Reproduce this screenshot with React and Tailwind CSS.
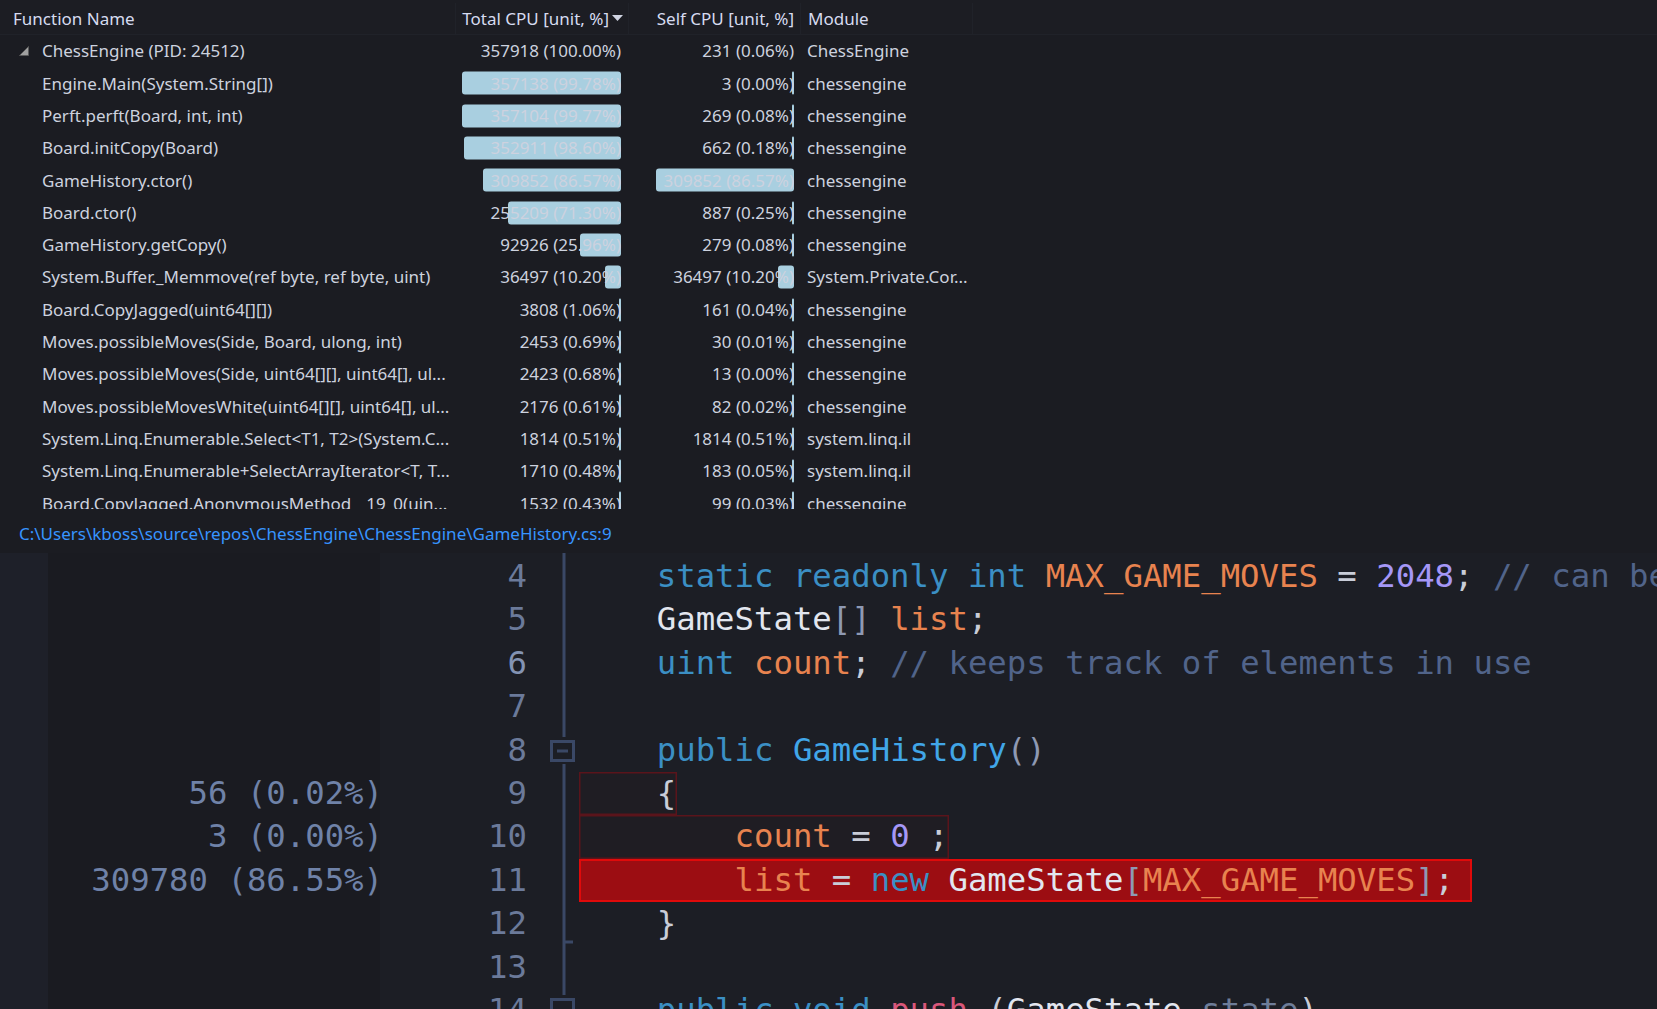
import React from "react";

const rows = [
  ["ChessEngine (PID: 24512)", "357918 (100.00%)", null, "231 (0.06%)", null, "ChessEngine", true],
  ["Engine.Main(System.String[])", "357138 (99.78%)", 99.78, "3 (0.00%)", 0, "chessengine"],
  ["Perft.perft(Board, int, int)", "357104 (99.77%)", 99.77, "269 (0.08%)", 0.08, "chessengine"],
  ["Board.initCopy(Board)", "352911 (98.60%)", 98.6, "662 (0.18%)", 0.18, "chessengine"],
  ["GameHistory.ctor()", "309852 (86.57%)", 86.57, "309852 (86.57%)", 86.57, "chessengine"],
  ["Board.ctor()", "255209 (71.30%)", 71.3, "887 (0.25%)", 0.25, "chessengine"],
  ["GameHistory.getCopy()", "92926 (25.96%)", 25.96, "279 (0.08%)", 0.08, "chessengine"],
  ["System.Buffer._Memmove(ref byte, ref byte, uint)", "36497 (10.20%)", 10.2, "36497 (10.20%)", 10.2, "System.Private.Cor..."],
  ["Board.CopyJagged(uint64[][])", "3808 (1.06%)", 1.06, "161 (0.04%)", 0.04, "chessengine"],
  ["Moves.possibleMoves(Side, Board, ulong, int)", "2453 (0.69%)", 0.69, "30 (0.01%)", 0.01, "chessengine"],
  ["Moves.possibleMoves(Side, uint64[][], uint64[], ul...", "2423 (0.68%)", 0.68, "13 (0.00%)", 0, "chessengine"],
  ["Moves.possibleMovesWhite(uint64[][], uint64[], ul...", "2176 (0.61%)", 0.61, "82 (0.02%)", 0.02, "chessengine"],
  ["System.Linq.Enumerable.Select<T1, T2>(System.C...", "1814 (0.51%)", 0.51, "1814 (0.51%)", 0.51, "system.linq.il"],
  ["System.Linq.Enumerable+SelectArrayIterator<T, T...", "1710 (0.48%)", 0.48, "183 (0.05%)", 0.05, "system.linq.il"],
  ["Board.CopyJagged.AnonymousMethod__19_0(uin...", "1532 (0.43%)", 0.43, "99 (0.03%)", 0.03, "chessengine"],
];

const kw = "text-[#3b8fc4]";
const field = "text-[#e8834f]";
const num = "text-[#a597f7]";
const punct = "text-[#c9cdd8]";
const brk = "text-[#8e99b3]";
const cmt = "text-[#51648a]";
const type = "text-[#e2e6ef]";

function CpuCell({ text, pct, className }) {
  return (
    <div className={`relative flex h-full items-center justify-end ${className}`}>
      {pct !== null && pct !== undefined && (
        <div
          className="absolute right-0 top-1/2 h-[23px] -translate-y-1/2 rounded-[3px] bg-[#a9cfe0]"
          style={{ width: Math.max(2, (pct / 100) * 159) }}
        />
      )}
      <span className="relative">{text}</span>
    </div>
  );
}

function Table() {
  return (
    <div className="h-[509px] overflow-hidden text-[17px] text-[#cdd2df]">
      <div className="flex h-[35px] items-center border-b border-[#202229] bg-[#1c1d23] pt-[3px] text-[#d6dbf0]">
        <div className="w-[455px] pl-[13px]">Function Name</div>
        <div className="flex h-full w-[173px] items-center justify-end gap-[3px] border-l border-[#202229] pr-[5px]">
          <span>Total CPU [unit, %]</span>
          <svg width="11" height="7" viewBox="0 0 11 7">
            <polygon points="0,0 11,0 5.5,6" fill="#d0d4e2" />
          </svg>
        </div>
        <div className="flex h-full w-[172px] items-center justify-end border-l border-[#202229] pr-[6px]">
          Self CPU [unit, %]
        </div>
        <div className="flex h-full w-[173px] items-center border-x border-[#202229] pl-[7px]">Module</div>
      </div>
      <div>
        {rows.map((r, i) => (
          <div key={i} className="flex h-[32.3px] items-center whitespace-nowrap">
            <div className="relative flex w-[455px] items-center pl-[42px]">
              {r[6] && (
                <svg className="absolute left-[19px]" width="10" height="10" viewBox="0 0 10 10">
                  <polygon points="9.5,0.5 9.5,9.5 0.5,9.5" fill="#a0a0a0" stroke="#5a5a5a" strokeWidth="0.8" />
                </svg>
              )}
              {r[0]}
            </div>
            <CpuCell text={r[1]} pct={r[2]} className="w-[166px]" />
            <div className="w-[7px]" />
            <CpuCell text={r[3]} pct={r[4]} className="w-[166px]" />
            <div className="w-[13px]" />
            <div>{r[5]}</div>
          </div>
        ))}
      </div>
    </div>
  );
}

const code = [
  { n: 4, parts: [["    ", ""], ["static readonly int ", kw], ["MAX_GAME_MOVES", field], [" = ", punct], ["2048", num], ["; ", punct], ["// can be changed if needed", cmt]] },
  { n: 5, parts: [["    ", ""], ["GameState", type], ["[]", brk], [" ", ""], ["list", field], [";", punct]] },
  { n: 6, parts: [["    ", ""], ["uint ", kw], ["count", field], ["; ", punct], ["// keeps track of elements in use", cmt]] },
  { n: 7, parts: [] },
  { n: 8, parts: [["    ", ""], ["public ", kw], ["GameHistory", "text-[#41a6e8]"], ["()", brk]] },
  { n: 9, parts: [["    ", ""], ["{", punct]], box: "w-[98px] bg-[#1f1d23] shadow-[inset_0_0_0_1.5px_#5a141b]", pct: "56 (0.02%)" },
  { n: 10, parts: [["        ", ""], ["count", field], [" = ", punct], ["0", num], [" ;", punct]], box: "w-[370px] bg-[#1f1d23] shadow-[inset_0_0_0_1.5px_#5a141b]", pct: "3 (0.00%)" },
  { n: 11, parts: [["        ", ""], ["list", field], [" = ", punct], ["new ", kw], ["GameState", type], ["[", brk], ["MAX_GAME_MOVES", field], ["]", brk], [";", punct]], box: "w-[893px] bg-[#9c0d12] shadow-[inset_0_0_0_2px_#e00a0a]", pct: "309780 (86.55%)" },
  { n: 12, parts: [["    ", ""], ["}", punct]] },
  { n: 13, parts: [] },
  { n: 14, parts: [["    ", ""], ["public void ", kw], ["push", "text-[#d9577a]"], [" (", punct], ["GameState", type], [" ", ""], ["state", "text-[#6e7d99]"], [")", punct]] },
];

function Gutter() {
  return (
    <svg width="54" height="456" viewBox="0 0 54 456" className="block">
      <g stroke="#3a4866" strokeWidth="3" fill="none">
        <line x1="39" y1="0" x2="39" y2="184" />
        <rect x="26.5" y="188.5" width="22" height="19" />
        <line x1="32" y1="198" x2="43" y2="198" />
        <line x1="39" y1="211" x2="39" y2="442" />
        <line x1="39" y1="389" x2="48" y2="389" />
        <rect x="26.5" y="446.5" width="22" height="19" />
      </g>
    </svg>
  );
}

function Editor() {
  const lineH = "h-[43.4px] leading-[43.4px]";
  return (
    <div
      className="flex h-[456px] overflow-hidden bg-[#1c1e25] text-[32.3px]"
      style={{ fontFamily: '"DejaVu Sans Mono", monospace' }}
    >
      <div className="w-[48px] shrink-0 bg-[#1e2029]" />
      <div className="w-[332px] shrink-0 bg-[#1a1b21] pt-[2px] text-right text-[#6f82a8]">
        {code.map((l) => (
          <div key={l.n} className={`${lineH} translate-x-[3px] whitespace-pre`}>{l.pct || ""}</div>
        ))}
      </div>
      <div className="w-[145px] shrink-0 pt-[2px] text-right text-[#6b7a9a]">
        {code.map((l) => (
          <div key={l.n} className={`${lineH} translate-x-[2px] ${l.n === 6 ? "text-[#8393b3]" : ""}`}>{l.n}</div>
        ))}
      </div>
      <div className="w-[54px] shrink-0">
        <Gutter />
      </div>
      <div className="min-w-0 flex-1 pt-[2px]">
        {code.map((l) => (
          <div key={l.n} className={`${lineH} whitespace-pre`}>
            {l.box ? (
              <span className={`inline-block ${lineH} align-top ${l.box}`}>
                {l.parts.map(([t, c], j) => (
                  <span key={j} className={c}>{t}</span>
                ))}
              </span>
            ) : (
              l.parts.map(([t, c], j) => (
                <span key={j} className={c}>{t}</span>
              ))
            )}
          </div>
        ))}
      </div>
    </div>
  );
}

export default function App() {
  return (
    <div
      className="h-[1009px] w-[1657px] overflow-hidden bg-[#1b1c22]"
      style={{ fontFamily: '"Noto Sans", "Open Sans", sans-serif' }}
    >
      <Table />
      <div className="flex h-[44px] items-center pl-[19px] pt-[6px] text-[17px] text-[#3794ff]">
        C:\Users\kboss\source\repos\ChessEngine\ChessEngine\GameHistory.cs:9
      </div>
      <Editor />
    </div>
  );
}
